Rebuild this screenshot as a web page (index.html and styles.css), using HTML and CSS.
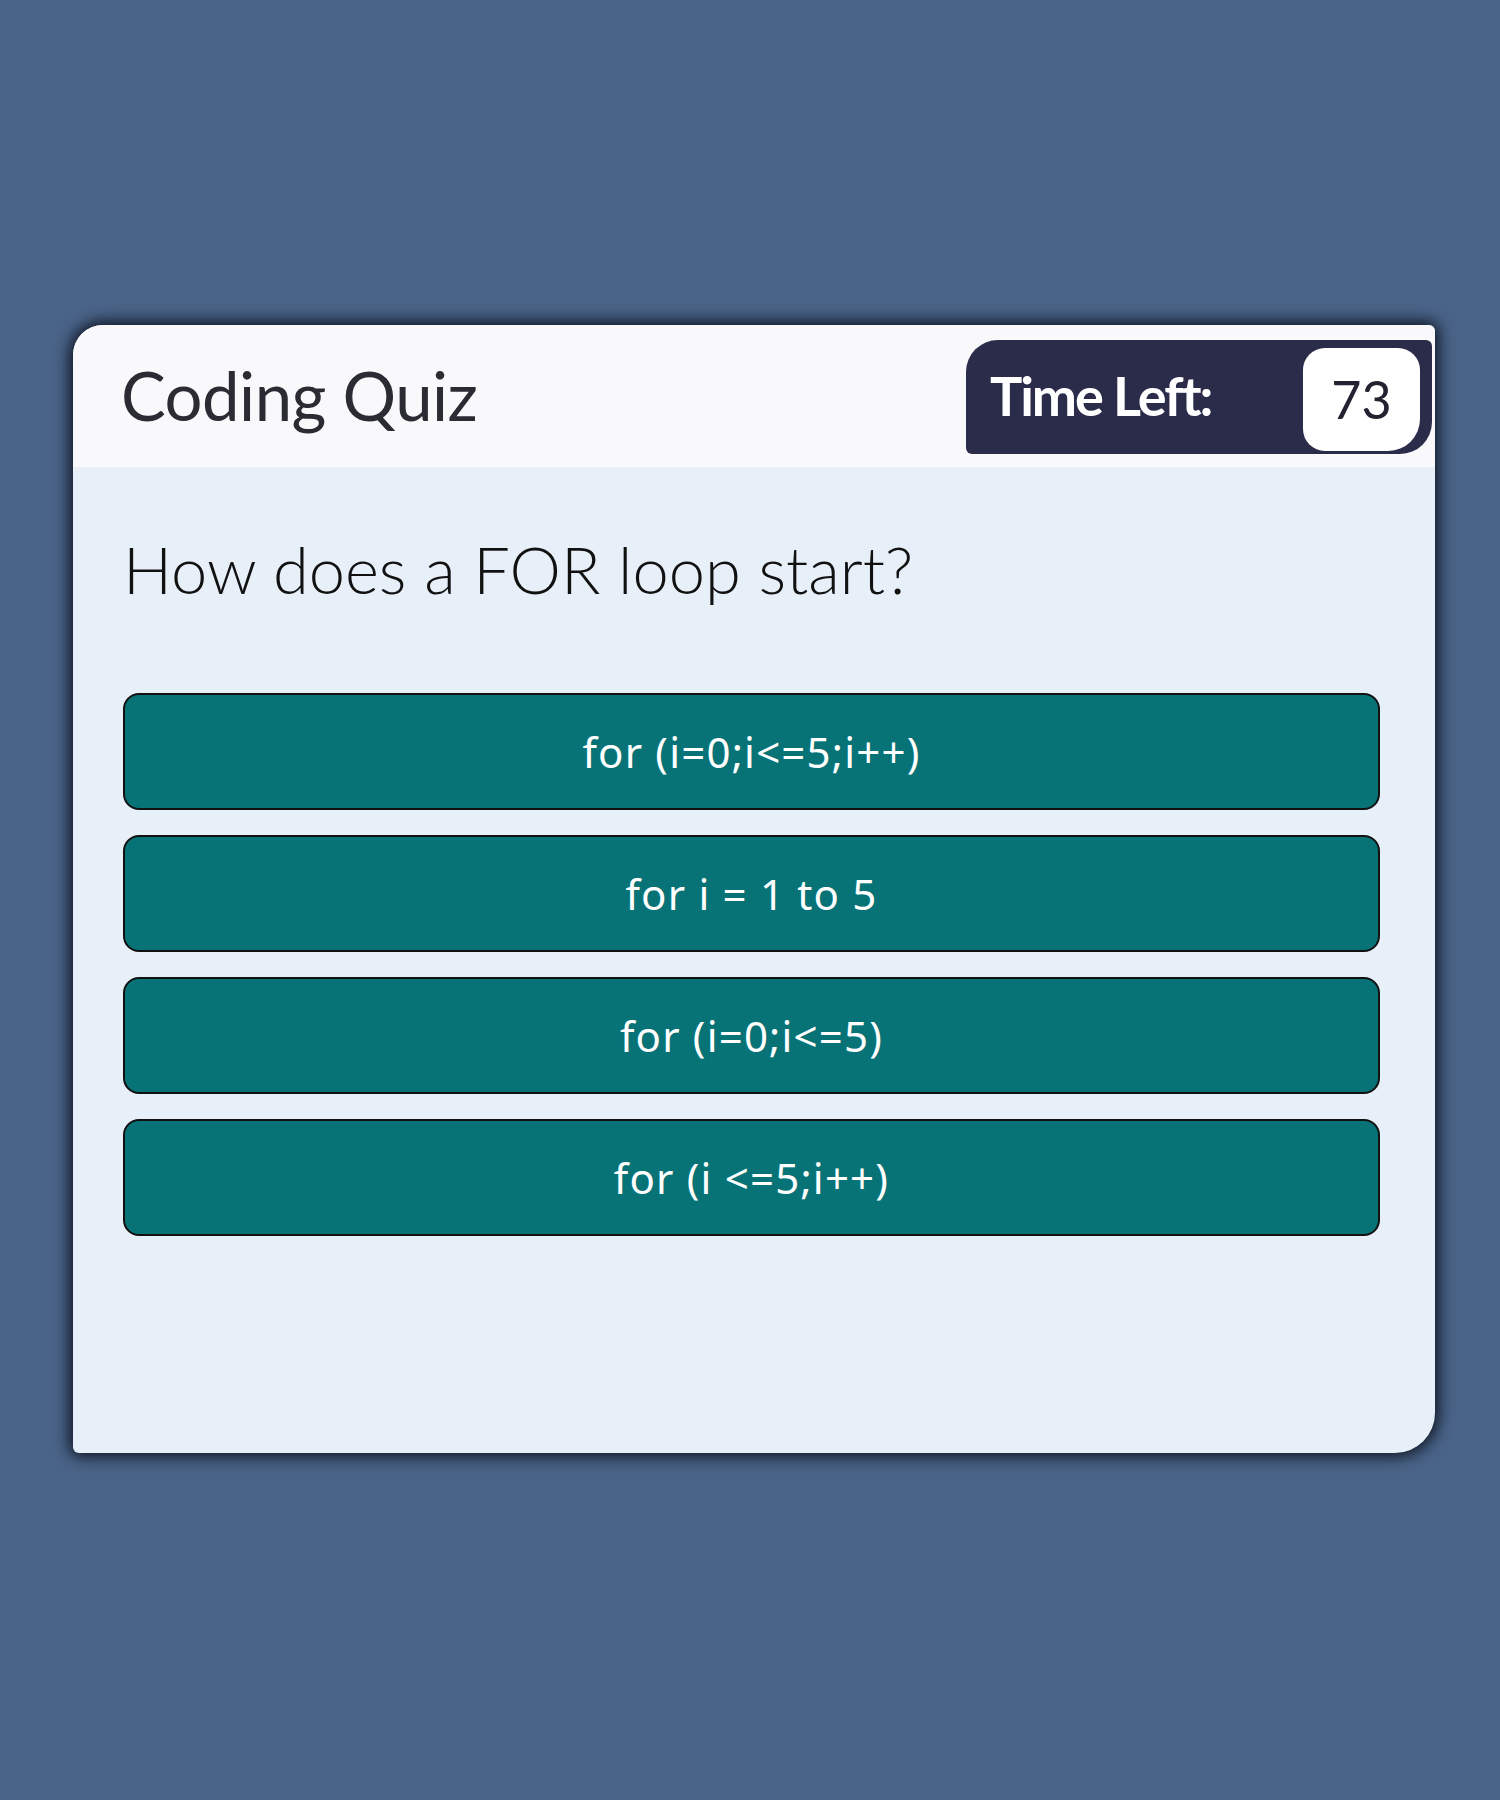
FILE: index.html
```html
<!DOCTYPE html>
<html lang="en">
<head>
<meta charset="utf-8">
<title>Coding Quiz</title>
<link rel="stylesheet" href="styles.css">
</head>
<body>
<main class="card">
  <header class="card-header">
    <h1 class="title">Coding Quiz</h1>
    <div class="timer">
      <span class="timer-label">Time Left:</span>
      <span class="timer-value">73</span>
    </div>
  </header>
  <section class="card-body">
    <h2 class="question">How does a FOR loop start?</h2>
    <div class="answers">
      <button class="answer">for (i=0;i&lt;=5;i++)</button>
      <button class="answer">for i = 1 to 5</button>
      <button class="answer">for (i=0;i&lt;=5)</button>
      <button class="answer">for (i &lt;=5;i++)</button>
    </div>
  </section>
</main>
</body>
</html>
```

FILE: styles.css
```css
* { box-sizing: border-box; }
html, body { margin: 0; padding: 0; }
body {
  background: #4a6488;
  min-height: 1800px;
  padding-top: 325px;
  font-family: "Lato", "Noto Sans", sans-serif;
}
.card {
  margin-left: 73px;
  width: 1362px;
  height: 1128px;
  background: #e7f0f9;
  border-radius: 30px 6px 40px 6px;
  box-shadow: 0 0 16px 3px rgba(5, 10, 20, 0.95);
  overflow: hidden;
}
.card-header {
  height: 142px;
  background: #f9f9fc;
  display: flex;
  align-items: flex-start;
  justify-content: space-between;
  padding: 15px 3px 0 48px;
  border-radius: 28px 6px 0 0;
}
.title {
  margin: 15px 0 0 0;
  font-family: "Lato", sans-serif;
  font-weight: 400;
  font-size: 67px;
  line-height: 80px;
  color: #2b2b33;
  letter-spacing: -0.5px;
}
.timer {
  display: flex;
  align-items: center;
  justify-content: space-between;
  width: 466px;
  height: 114px;
  background: #2b2b4a;
  border-radius: 32px 6px 32px 6px;
  padding: 0 12px 0 24px;
}
.timer-label {
  color: #ffffff;
  font-family: "Lato", sans-serif;
  font-weight: 700;
  font-size: 54px;
  letter-spacing: -2px;
  margin-top: -4px;
}
.timer-value {
  display: flex;
  align-items: center;
  justify-content: center;
  width: 117px;
  height: 103px;
  background: #ffffff;
  border-radius: 22px 22px 32px 22px;
  color: #222230;
  font-family: "Lato", sans-serif;
  font-weight: 400;
  font-size: 52px;
  margin-top: 4px;
}
.card-body {
  padding: 62px 55px 0 50px;
}
.question {
  margin: 0;
  font-family: "Lato", sans-serif;
  font-weight: 300;
  font-size: 65px;
  line-height: 80px;
  color: #111111;
  padding-left: 0;
}
.answers {
  margin-top: 84px;
  display: flex;
  flex-direction: column;
  gap: 25px;
}
.answer {
  display: block;
  width: 100%;
  height: 117px;
  background: #077377;
  border: 2px solid #111111;
  border-radius: 16px;
  color: #ffffff;
  font-family: "Noto Sans", "Open Sans", sans-serif;
  font-weight: 400;
  font-size: 42px;
  letter-spacing: 1.2px;
  text-align: center;
  cursor: pointer;
  padding: 0;
}
```
